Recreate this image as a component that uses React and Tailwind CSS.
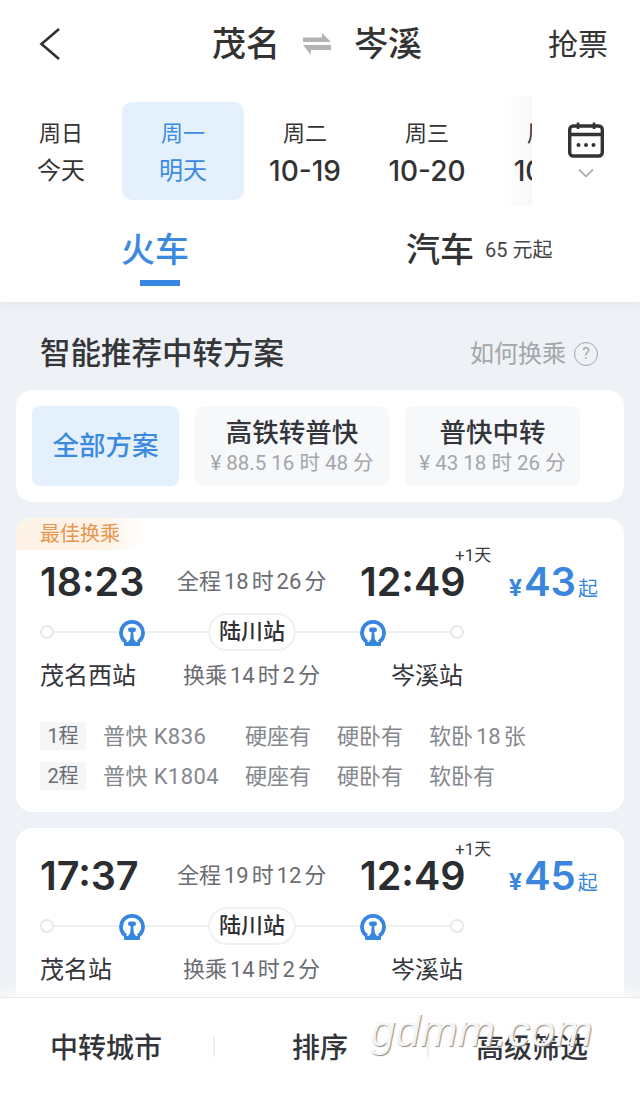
const FONT = 'font-["Roboto","Noto_Sans_CJK_SC",sans-serif]'
const NUM = 'font-["Inter","Noto_Sans_CJK_SC",sans-serif]'

const DAYS = [
  { week: '周日', date: '今天' },
  { week: '周一', date: '明天', active: true },
  { week: '周二', date: '10-19', num: true },
  { week: '周三', date: '10-20', num: true },
]

const PLANS = [
  {
    from: '18:23', total: '全程 18 时 26 分', price: '43', start: '茂名西站', transfer: '换乘 14 时 2 分', best: true,
    legs: [
      { no: '1程', train: '普快 K836', seats: ['硬座有', '硬卧有', '软卧 18 张'] },
      { no: '2程', train: '普快 K1804', seats: ['硬座有', '硬卧有', '软卧有'] },
    ],
  },
  { from: '17:37', total: '全程 19 时 12 分', price: '45', start: '茂名站', transfer: '换乘 14 时 2 分', legs: [] },
]

function RailLogo() {
  return (
    <svg width="26" height="30" viewBox="0 0 26 30" className="shrink-0">
      <path d="M7 25 A11 11 0 1 1 19 25" fill="none" stroke="#3685e0" strokeWidth="3.8" />
      <rect x="9" y="10.5" width="8" height="4.5" rx="2.2" fill="#3685e0" />
      <path d="M11.8 14h2.4l.6 8 2.2 3H9l2.2-3z" fill="#3685e0" />
      <rect x="5" y="25" width="16" height="4" rx="1" fill="#3685e0" />
    </svg>
  )
}

function Dot() {
  return <div className="w-[14px] h-[14px] rounded-full border-2 border-[#e6e8eb] bg-white shrink-0" />
}

function Line({ className }) {
  return <div className={`h-[2px] bg-[#eff0f2] shrink-0 ${className}`} />
}

function PlanCard({ plan }) {
  return (
    <div className={`relative bg-white rounded-[16px] mt-[16px] mx-[16px] shrink-0 px-[24px] pb-[22px] ${plan.best ? 'pt-[40px]' : 'pt-[24px]'}`}>
      {plan.best && (
        <div className="absolute left-0 top-0 h-[32px] w-[126px] pl-[24px] rounded-tl-[16px] rounded-br-[18px] bg-gradient-to-r from-[#fff3e8] from-70% to-white text-[20px] leading-[32px] text-[#e8964e]">
          最佳换乘
        </div>
      )}
      <div className="flex items-center h-[48px]">
        <span className={`w-[137px] text-[39.5px] font-semibold leading-[48px] text-[#2b2d30] ${NUM}`}>{plan.from}</span>
        <span className="w-[183px] text-[22px] text-[#6a6d72] leading-[48px] [word-spacing:-2.5px]">{plan.total}</span>
        <span className={`relative w-[149px] text-[39.5px] font-semibold leading-[48px] text-[#2b2d30] ${NUM}`}>
          12:49
          <span className={`absolute left-[95px] top-[-13px] text-[17px] leading-[20px] font-normal text-[#3a3c40] ${FONT}`}>+1天</span>
        </span>
        <span className="flex items-baseline text-[#3a86de]">
          <span className="text-[24px] font-bold">¥</span>
          <span className={`text-[40px] font-semibold leading-[48px] ml-[2px] ${NUM}`}>{plan.price}</span>
          <span className="text-[20px] ml-[2px]">起</span>
        </span>
      </div>
      <div className="mt-[7px] h-[38px] flex items-center">
        <Dot />
        <Line className="w-[65px]" />
        <RailLogo />
        <Line className="w-[63px]" />
        <div className="h-[38px] w-[88px] rounded-full border-2 border-[#eff0f2] text-center text-[22px] font-medium leading-[33px] text-[#2f3134] shrink-0">陆川站</div>
        <Line className="w-[64px]" />
        <RailLogo />
        <Line className="w-[64px]" />
        <Dot />
      </div>
      <div className="mt-[8px] flex h-[34px] leading-[34px]">
        <span className="w-[143px] text-[24px] text-[#33353a]">{plan.start}</span>
        <span className="w-[208px] text-[22px] text-[#6a6d72] [word-spacing:-2.5px]">{plan.transfer}</span>
        <span className="text-[24px] text-[#33353a]">岑溪站</span>
      </div>
      {plan.legs.length > 0 && (
        <div className="mt-[29px] flex flex-col gap-[12px]">
          {plan.legs.map(leg => (
            <div key={leg.no} className="flex items-center h-[28px] text-[22px] text-[#85888d]">
              <span className="w-[46px] h-[28px] bg-[#f5f6f7] text-center text-[20px] leading-[28px] text-[#6a6d72]">{leg.no}</span>
              <span className="w-[142px] ml-[17px] tracking-[0.4px]">{leg.train}</span>
              <span className="w-[92px]">{leg.seats[0]}</span>
              <span className="w-[92px]">{leg.seats[1]}</span>
              <span className="[word-spacing:-2.5px]">{leg.seats[2]}</span>
            </div>
          ))}
        </div>
      )}
    </div>
  )
}

export default function App() {
  return (
    <div className={`relative w-[640px] h-[1096px] overflow-hidden flex flex-col bg-[#eef1f5] ${FONT}`}>
      <header className="bg-white h-[302px] shrink-0 shadow-[0_2px_8px_rgba(0,0,0,0.06)] z-10">
        <div className="h-[102px] flex items-start pt-[21px] text-[#333]">
          <svg width="24" height="36" viewBox="0 0 24 36" fill="none" stroke="#333" strokeWidth="2.6" className="ml-[38px] mt-[5px] shrink-0">
            <path d="M21 3 L3.5 18 L21 33" />
          </svg>
          <div className="ml-[150px] flex items-center text-[34px] leading-[46px] font-medium">
            <span>茂名</span>
            <svg width="28" height="22" viewBox="0 0 28 22" fill="#b3b3b3" className="mx-[23px]">
              <path d="M0 4.5H19V0L28 9H0Z" />
              <path d="M28 12H0L8 22V17H28Z" />
            </svg>
            <span>岑溪</span>
          </div>
          <span className="ml-[126px] mt-[2px] text-[30px] leading-[44px]">抢票</span>
        </div>
        <div className="flex h-[98px]">
          {DAYS.map(d => (
            <div key={d.week} className={`w-[122px] h-[98px] rounded-[10px] flex flex-col items-center shrink-0 pt-[17px] ${d.active ? 'bg-[#e4f0fc] text-[#3c8ae0]' : 'text-[#333]'}`}>
              <span className="text-[22px] leading-[30px]">{d.week}</span>
              <span className={`mt-[5px] leading-[34px] ${d.num ? `text-[28px] font-medium ${NUM}` : 'text-[24px]'}`}>{d.date}</span>
            </div>
          ))}
          <div className="w-[44px] h-[110px] -mt-[6px] shrink-0 overflow-hidden text-[#333] pt-[23px] bg-gradient-to-r from-white from-25% to-[#f8f8f8]">
            <div className="w-[122px] text-center text-[22px] leading-[30px]">周四</div>
            <div className={`w-[122px] text-center mt-[5px] text-[28px] font-medium leading-[34px] ${NUM}`}>10-21</div>
          </div>
          <div className="flex flex-col items-center ml-[36px] pt-[20px]">
            <svg width="36" height="36" viewBox="0 0 36 36" fill="none" stroke="#333" strokeWidth="3.4">
              <rect x="1.7" y="4" width="32.6" height="30" rx="3.5" />
              <path d="M1.7 12.5H34.3" />
              <path d="M10 0.5V7M26 0.5V7" strokeWidth="2.6" />
              <circle cx="10.5" cy="23" r="2" fill="#333" stroke="none" />
              <circle cx="18" cy="23" r="2" fill="#333" stroke="none" />
              <circle cx="25.5" cy="23" r="2" fill="#333" stroke="none" />
            </svg>
            <svg width="16" height="10" viewBox="0 0 16 10" fill="none" stroke="#b0b0b0" strokeWidth="1.8" className="mt-[10px]">
              <path d="M1 1.5 L8 8.5 L15 1.5" />
            </svg>
          </div>
        </div>
        <div className="h-[102px] flex items-start pt-[28px]">
          <div className="ml-[121px] w-[68px] flex flex-col">
            <span className="text-[34px] leading-[44px] font-medium text-[#3c8ae0]">火车</span>
            <div className="ml-[19px] mt-[8px] w-[40px] h-[6px] bg-[#3685e0]" />
          </div>
          <span className="ml-[217px] text-[34px] leading-[44px] font-medium text-[#333]">汽车</span>
          <span className="ml-[11px] mt-[8px] text-[20px] leading-[28px] text-[#444]">65 元起</span>
        </div>
      </header>

      <main className="flex-1 min-h-0 overflow-hidden flex flex-col">
        <div className="flex items-center justify-between h-[88px] pt-[16px] pl-[40px] pr-[42px] shrink-0">
          <span className="text-[30.5px] font-medium text-[#34363a]">智能推荐中转方案</span>
          <span className="flex items-center text-[24px] text-[#a3a6aa]">
            如何换乘
            <span className="ml-[8px] w-[24px] h-[24px] rounded-full border border-[#a3a6aa] text-[16px] leading-[22px] text-center">?</span>
          </span>
        </div>
        <div className="mx-[16px] h-[112px] shrink-0 rounded-[16px] bg-white flex items-center pl-[16px] gap-[16px]">
          <div className="w-[147px] h-[80px] rounded-[8px] bg-[#e4f0fc] text-[#3c8ae0] text-[26.5px] font-medium flex items-center justify-center">全部方案</div>
          <div className="w-[194px] h-[80px] rounded-[8px] bg-[#f6f8fa] flex flex-col items-center justify-center">
            <span className="text-[26.5px] leading-[34px] font-medium text-[#33353a]">高铁转普快</span>
            <span className="text-[20.5px] leading-[26px] text-[#a3a6aa]">¥ 88.5 16 时 48 分</span>
          </div>
          <div className="w-[175px] h-[80px] rounded-[8px] bg-[#f6f8fa] flex flex-col items-center justify-center">
            <span className="text-[26.5px] leading-[34px] font-medium text-[#33353a]">普快中转</span>
            <span className="text-[20.5px] leading-[26px] text-[#a3a6aa]">¥ 43 18 时 26 分</span>
          </div>
        </div>
        {PLANS.map(p => <PlanCard key={p.from} plan={p} />)}
      </main>

      <footer className="relative z-10 h-[99px] shrink-0 bg-white border-t border-[#e9eaec] shadow-[0_-8px_10px_rgba(255,255,255,0.6)] text-[#33353a] text-[28px] font-medium flex items-start pt-[31px] leading-[40px]">
        <span className="ml-[50px] w-[112px]">中转城市</span>
        <div className="ml-[51px] mt-[8px] w-[2px] h-[20px] bg-[#eeeeee]" />
        <span className="ml-[77px] w-[56px]">排序</span>
        <div className="ml-[79px] mt-[8px] w-[2px] h-[20px] bg-[#eeeeee]" />
        <span className="ml-[47px]">高级筛选</span>
        <span className="absolute left-[370px] top-[6px] text-[45px] leading-[54px] italic font-['Liberation_Sans',sans-serif] font-normal text-white/90 [text-shadow:1px_1px_1px_#8a8a8a]">gdmm.com</span>
      </footer>
    </div>
  )
}
